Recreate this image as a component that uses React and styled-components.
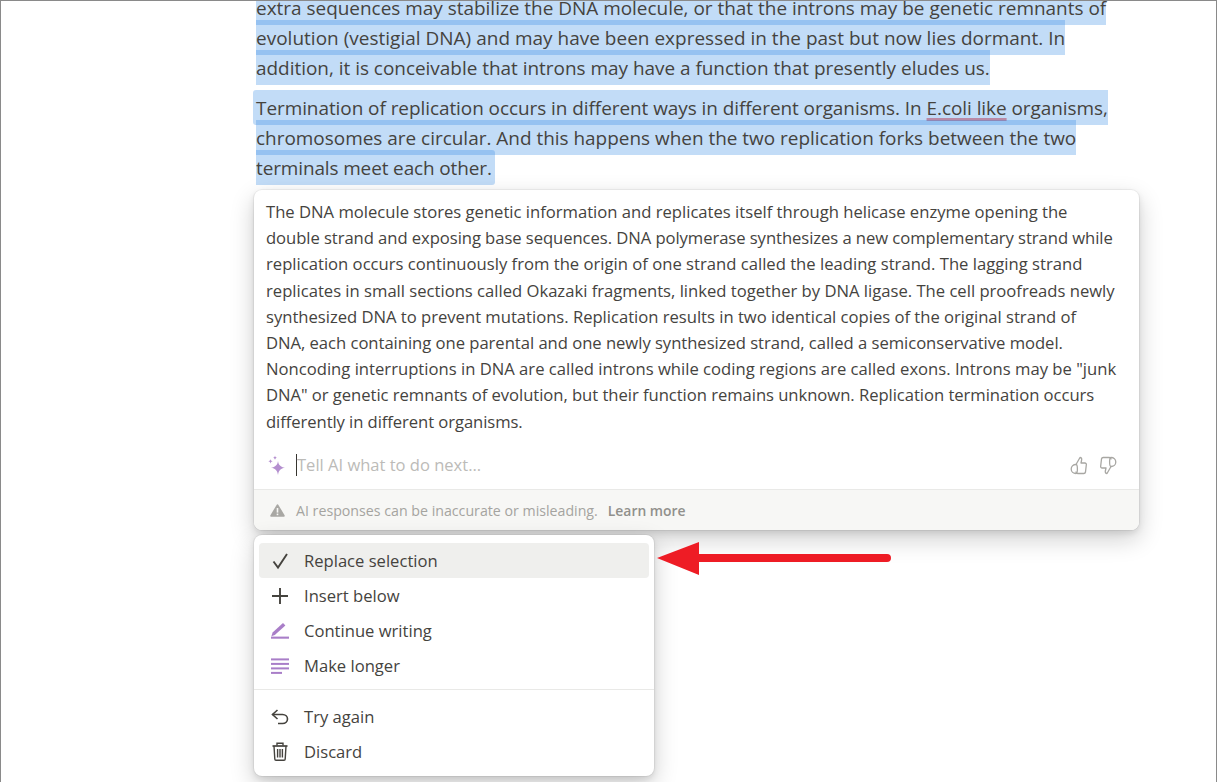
import React from "react";
import styled, { createGlobalStyle } from "styled-components";

const Global = createGlobalStyle`
  html, body { margin: 0; padding: 0; background: #fff; }
  body { font-family: "Open Sans", "Noto Sans", sans-serif; color: #37352f; }
`;

const Frame = styled.div`
  position: relative;
  box-sizing: border-box;
  width: 1217px;
  height: 782px;
  overflow: hidden;
  background: #fff;
  border: 1px solid #8a8a8a;
  border-bottom: 0;
  padding-left: 255px;
`;

const Article = styled.article`
  margin-top: -8px;
  width: 880px;
  font-size: 18.95px;
  line-height: 30px;
  color: #45433e;
`;

const Paragraph = styled.p`
  margin: 0 0 10px;
`;

const Line = styled.div`
  white-space: nowrap;
  height: 30px;
  letter-spacing: ${(p) => p.$track || 0}px;
`;

const Selected = styled.span`
  background: rgba(35, 131, 226, 0.28);
  padding: 5px 0 4px;
  margin-left: ${(p) => (p.$lead ? "-3px" : "0")};
  padding-left: ${(p) => (p.$lead ? "3px" : "0")};
  padding-right: ${(p) => (p.$tail ? "3px" : "0")};
  border-radius: ${(p) => (p.$lead ? "3px 0 0 3px" : p.$tail ? "0 3px 3px 0" : "0")};
`;

const Spell = styled.span`
  text-decoration: underline;
  text-decoration-color: #b98aa6;
  text-decoration-thickness: 3px;
  text-underline-offset: 3px;
  text-decoration-skip-ink: none;
`;

const Stack = styled.div`
  margin-left: -2px;
  margin-top: -3px;
  display: flex;
  flex-direction: column;
  gap: 5px;
  align-items: flex-start;
`;

const Card = styled.section`
  width: 885px;
  height: 340px;
  box-sizing: border-box;
  background: #fff;
  border-radius: 8px;
  box-shadow: 0 0 0 1px rgba(15, 15, 15, 0.05), 0 3px 6px rgba(15, 15, 15, 0.1), 0 9px 24px rgba(15, 15, 15, 0.2);
  display: flex;
  flex-direction: column;
  overflow: hidden;
`;

const Body = styled.div`
  box-sizing: border-box;
  padding: 9px 12px 0;
  height: 251px;
  font-size: 16.65px;
  line-height: 26.2px;
  color: #45433e;
`;

const BodyLine = styled.div`
  white-space: nowrap;
  letter-spacing: ${(p) => p.$track || 0}px;
`;

const PromptRow = styled.div`
  height: 48px;
  display: flex;
  align-items: center;
  padding: 0 12px 0 14px;
  font-size: 16.55px;
  color: #bcbbb8;
`;

const Placeholder = styled.div`
  flex: 1;
  margin-left: 10px;
  border-left: 1px solid #37352f;
  line-height: 22px;
  height: 22px;
`;

const Thumbs = styled.div`
  display: flex;
  gap: 11px;
  color: #a8a7a3;
  margin-right: 10px;
`;

const Notice = styled.footer`
  flex: 1;
  background: #f7f7f5;
  border-top: 1px solid #e9e9e7;
  display: flex;
  align-items: center;
  padding: 0 0 0 16px;
  font-size: 14.2px;
  color: #a5a4a0;
`;

const NoticeText = styled.span`
  margin-left: 11px;
`;

const LearnMore = styled.span`
  margin-left: 10px;
  font-size: 13.9px;
  font-weight: 600;
  color: #91908c;
`;

const Menu = styled.nav`
  width: 400px;
  height: 241px;
  box-sizing: border-box;
  background: #fff;
  border-radius: 8px;
  box-shadow: 0 0 0 1px rgba(15, 15, 15, 0.05), 0 3px 6px rgba(15, 15, 15, 0.1), 0 9px 24px rgba(15, 15, 15, 0.2);
  padding: 8px 0 5px;
`;

const MenuGroup = styled.div`
  padding: 0 5px;
  display: flex;
  flex-direction: column;
`;

const MenuItem = styled.div`
  height: 35px;
  display: flex;
  align-items: center;
  border-radius: 4px;
  padding-left: 10px;
  gap: 13px;
  font-size: 16.6px;
  color: #45433e;
  background: ${(p) => (p.$active ? "#efefed" : "transparent")};
`;

const IconSlot = styled.span`
  width: 22px;
  height: 22px;
  display: flex;
  align-items: center;
  justify-content: center;
  color: ${(p) => (p.$ai ? "#a97ec8" : "#45433e")};
`;

const Divider = styled.div`
  height: 1px;
  background: #e9e9e7;
  margin: 6px 0 9px;
`;

const Arrow = styled.svg`
  position: absolute;
  left: 655px;
  top: 541px;
`;

const Check = () => (
  <svg width="18" height="18" viewBox="0 0 18 18" fill="none" stroke="currentColor" strokeWidth="1.9">
    <path d="M2.5 9.5 L7 15.5 L16 2" />
  </svg>
);
const Plus = () => (
  <svg width="18" height="18" viewBox="0 0 18 18" fill="none" stroke="currentColor" strokeWidth="1.9">
    <path d="M9 1 V17 M1 9 H17" />
  </svg>
);
const Pen = () => (
  <svg width="18" height="16" viewBox="0 0 18 16" fill="currentColor">
    <rect x="0" y="13.6" width="18" height="2.1" />
    <path d="M0.4 13.2 L1.6 9.6 L12 0 L14.4 2.4 L3.8 12 Z" />
  </svg>
);
const Lines = () => (
  <svg width="18" height="16" viewBox="0 0 18 16" fill="currentColor">
    <rect x="0" y="0.4" width="18" height="2" />
    <rect x="0" y="4.9" width="18" height="2" />
    <rect x="0" y="9.4" width="18" height="2" />
    <rect x="0" y="13.9" width="11" height="2" />
  </svg>
);
const Undo = () => (
  <svg width="18" height="16" viewBox="0 0 18 16" fill="none" stroke="currentColor" strokeWidth="1.6">
    <path d="M6.5 1 L1.5 5.5 L6.5 10" />
    <path d="M1.5 5.5 H11.5 C14.5 5.5 16.5 7.5 16.5 10 C16.5 12.5 14.5 14.5 11.5 14.5 H7" />
  </svg>
);
const Trash = () => (
  <svg width="16" height="19" viewBox="0 0 16 19" fill="none" stroke="currentColor" strokeWidth="1.4">
    <path d="M0.5 4 H15.5" strokeWidth="1.7" />
    <path d="M5 3.5 V1.2 H11 V3.5" />
    <path d="M2 4 L2.8 17 C2.8 17.8 3.3 18.2 4 18.2 H12 C12.7 18.2 13.2 17.8 13.2 17 L14 4" />
    <path d="M5.6 7 V15.5 M8 7 V15.5 M10.4 7 V15.5" />
  </svg>
);
const Sparkle = () => (
  <svg width="18" height="20" viewBox="0 0 18 20" fill="#b48fcf">
    <path d="M10 6 C10.6 10 12.5 12 17 12.8 C12.5 13.6 10.6 15.5 10 20 C9.4 15.5 7.5 13.6 3 12.8 C7.5 12 9.4 10 10 6 Z" />
    <path d="M7 0.5 C7.2 1.9 7.8 2.5 9 2.8 C7.8 3.1 7.2 3.7 7 5 C6.8 3.7 6.2 3.1 5 2.8 C6.2 2.5 6.8 1.9 7 0.5 Z" />
    <path d="M2.5 4 C2.7 5.5 3.3 6 4.8 6.3 C3.3 6.6 2.7 7.2 2.5 8.7 C2.3 7.2 1.7 6.6 0.2 6.3 C1.7 6 2.3 5.5 2.5 4 Z" />
  </svg>
);
const ThumbUp = () => (
  <svg width="18" height="19" viewBox="0 0 18 19" fill="none" stroke="currentColor" strokeWidth="1.3" strokeLinejoin="round">
    <path d="M6 8.5 L10 1.5 C11.5 1.5 12 2.8 11.6 4.2 L11 7 H14.8 C16 7 16.6 8 16.3 9 L15.5 16 C15.3 17 14.6 17.5 13.8 17.5 H8 C6.8 17.5 6 16.7 6 15.5" />
    <path d="M6 8.5 C3.4 8.5 1.2 10.4 1.2 13 C1.2 15.6 3.4 17.5 6 17.5 C7 17.5 7.4 16 7.4 13 C7.4 10 7 8.5 6 8.5 Z" />
  </svg>
);
const ThumbDown = () => (
  <svg width="18" height="19" viewBox="0 0 18 19" fill="none" stroke="currentColor" strokeWidth="1.3" strokeLinejoin="round">
    <g transform="translate(18 19) rotate(180)">
      <path d="M6 8.5 L10 1.5 C11.5 1.5 12 2.8 11.6 4.2 L11 7 H14.8 C16 7 16.6 8 16.3 9 L15.5 16 C15.3 17 14.6 17.5 13.8 17.5 H8 C6.8 17.5 6 16.7 6 15.5" />
      <path d="M6 8.5 C3.4 8.5 1.2 10.4 1.2 13 C1.2 15.6 3.4 17.5 6 17.5 C7 17.5 7.4 16 7.4 13 C7.4 10 7 8.5 6 8.5 Z" />
    </g>
  </svg>
);
const Warn = () => (
  <svg width="15" height="13" viewBox="0 0 15 13" fill="#a9a8a4">
    <path d="M7.5 0.3 C7.9 0.3 8.2 0.5 8.4 0.9 L14.6 11.3 C15 12 14.5 12.8 13.7 12.8 H1.3 C0.5 12.8 0 12 0.4 11.3 L6.6 0.9 C6.8 0.5 7.1 0.3 7.5 0.3 Z" />
    <rect x="6.7" y="4" width="1.6" height="4.6" fill="#f7f7f5" />
    <rect x="6.7" y="9.6" width="1.6" height="1.6" fill="#f7f7f5" />
  </svg>
);

const summary = [
  { text: "The DNA molecule stores genetic information and replicates itself through helicase enzyme opening the", track: -0.01 },
  { text: "double strand and exposing base sequences. DNA polymerase synthesizes a new complementary strand while", track: -0.068 },
  { text: "replication occurs continuously from the origin of one strand called the leading strand. The lagging strand" },
  { text: "replicates in small sections called Okazaki fragments, linked together by DNA ligase. The cell proofreads newly", track: -0.01 },
  { text: "synthesized DNA to prevent mutations. Replication results in two identical copies of the original strand of", track: -0.02 },
  { text: "DNA, each containing one parental and one newly synthesized strand, called a semiconservative model.", track: -0.04 },
  { text: "Noncoding interruptions in DNA are called introns while coding regions are called exons. Introns may be \"junk" },
  { text: "DNA\" or genetic remnants of evolution, but their function remains unknown. Replication termination occurs", track: -0.05 },
  { text: "differently in different organisms.", track: -0.08 },
];

const menuTop = [
  { label: "Replace selection", icon: <Check />, active: true },
  { label: "Insert below", icon: <Plus /> },
  { label: "Continue writing", icon: <Pen />, ai: true },
  { label: "Make longer", icon: <Lines />, ai: true },
];
const menuBottom = [
  { label: "Try again", icon: <Undo /> },
  { label: "Discard", icon: <Trash /> },
];

const Item = ({ label, icon, active, ai }) => (
  <MenuItem $active={active}>
    <IconSlot $ai={ai}>{icon}</IconSlot>
    {label}
  </MenuItem>
);

export default function App() {
  return (
    <Frame>
      <Global />
      <Article>
        <Paragraph>
          <Line><Selected>extra sequences may stabilize the DNA molecule, or that the introns may be genetic remnants of</Selected></Line>
          <Line $track={0.033}><Selected>evolution (vestigial DNA) and may have been expressed in the past but now lies dormant. In</Selected></Line>
          <Line $track={-0.01}><Selected>addition, it is conceivable that introns may have a function that presently eludes us.</Selected></Line>
        </Paragraph>
        <Paragraph>
          <Line $track={-0.05}><Selected $lead>Termination of replication occurs in different ways in different organisms. In <Spell>E.coli like</Spell> organisms,</Selected></Line>
          <Line><Selected>chromosomes are circular. And this happens when the two replication forks between the two</Selected></Line>
          <Line $track={-0.11}><Selected $tail>terminals meet each other.</Selected></Line>
        </Paragraph>
      </Article>
      <Stack>
        <Card>
          <Body>
            {summary.map((l) => <BodyLine key={l.text} $track={l.track}>{l.text}</BodyLine>)}
          </Body>
          <PromptRow>
            <Sparkle />
            <Placeholder>Tell AI what to do next...</Placeholder>
            <Thumbs><ThumbUp /><ThumbDown /></Thumbs>
          </PromptRow>
          <Notice>
            <Warn />
            <NoticeText>AI responses can be inaccurate or misleading.</NoticeText>
            <LearnMore>Learn more</LearnMore>
          </Notice>
        </Card>
        <Menu>
          <MenuGroup>{menuTop.map((i) => <Item key={i.label} {...i} />)}</MenuGroup>
          <Divider />
          <MenuGroup>{menuBottom.map((i) => <Item key={i.label} {...i} />)}</MenuGroup>
        </Menu>
      </Stack>
      <Arrow width="236" height="38" viewBox="0 0 236 38">
        <path d="M1 16 L43 0 V12 H231 a4 4 0 0 1 0 8 H43 V33 Z" fill="#ee1c25" />
      </Arrow>
    </Frame>
  );
}
